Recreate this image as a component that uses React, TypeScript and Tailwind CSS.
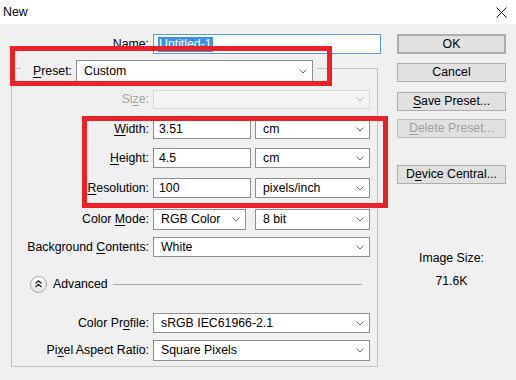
import React from "react";

// Access-key label: underlines one character
function Key({ pre = "", k, post = "" }: { pre?: string; k: string; post?: string }) {
  return (
    <span>
      {pre}
      <span className="underline underline-offset-[2px]">{k}</span>
      {post}
    </span>
  );
}

function Chevron({ light }: { light?: boolean }) {
  return (
    <svg width="8" height="5" viewBox="0 0 8 5" className="shrink-0">
      <path d="M0.5 0.5 L4 4 L7.5 0.5" fill="none" stroke={light ? "#b8b8b8" : "#6a6a6a"} strokeWidth="1" />
    </svg>
  );
}

function Select({ value, className = "", disabled }: { value: string; className?: string; disabled?: boolean }) {
  return (
    <div
      className={`flex h-full items-center justify-between border pl-[7px] pr-[5px] ${
        disabled ? "border-[#d9d9d9] bg-[#f4f4f4]" : "border-[#8f8f8f] bg-white"
      } ${className}`}
    >
      <span>{value}</span>
      <Chevron light={disabled} />
    </div>
  );
}

function Field({ value, className = "" }: { value: string; className?: string }) {
  return (
    <div className={`flex h-full items-center border border-[#8f8f8f] bg-white pl-[5px] ${className}`}>
      {value}
    </div>
  );
}

function Row({ label, className = "", children }: { label: React.ReactNode; className?: string; children: React.ReactNode }) {
  return (
    <div className={`flex items-center ${className}`}>
      <div className="w-[141px] shrink-0 pr-[4px] text-right">{label}</div>
      {children}
    </div>
  );
}

function Button({ children, className = "" }: { children: React.ReactNode; className?: string }) {
  return (
    <div className={`flex h-[19px] items-center justify-center border border-[#adadad] bg-[#e1e1e1] ${className}`}>
      {children}
    </div>
  );
}

export default function App() {
  return (
    <div className="relative h-[380px] w-[516px] overflow-hidden bg-[#f0f0f0] font-['Liberation_Sans',Arial,sans-serif] text-[12.3px] leading-[15px] text-black">
      {/* title bar */}
      <div className="flex h-[24px] items-center justify-between bg-white pl-[3px] pr-[9px]">
        <span>New</span>
        <svg width="11" height="11" viewBox="0 0 11 11">
          <path d="M0.5 0.5 L10.5 10.5 M10.5 0.5 L0.5 10.5" stroke="#111" strokeWidth="1" />
        </svg>
      </div>

      <div className="flex">
        {/* left column */}
        <div className="w-[397px] shrink-0 pt-[10px]">
          <div className="flex h-[20px] items-center">
            <div className="w-[153px] pr-[4px] text-right">
              <Key k="N" post="ame:" />
            </div>
            <div className="flex h-full w-[228px] items-center border border-[#5a9ad8] bg-white pl-[4px]">
              <span className="bg-[#3d8ee6] px-[1px] text-white">Untitled-1</span>
            </div>
          </div>

          {/* group box */}
          <div className="ml-[11px] mt-[14px] w-[367px] border border-[#c4c4c4] pb-[5px]">
            <div className="-mt-[9px] ml-[9px] flex h-[22px] w-[296px] items-center bg-[#f0f0f0]">
              <div className="w-[55px] pr-[4px] text-right">
                <Key k="P" post="reset:" />
              </div>
              <Select value="Custom" className="w-[237px]" />
            </div>

            <Row className="mt-[8px] h-[19px]" label={<span className="text-[#a4a4a4]"><Key pre="Si" k="z" post="e:" /></span>}>
              <Select value="" disabled className="w-[217px]" />
            </Row>

            <Row className="mt-[11px] h-[19px]" label={<Key k="W" post="idth:" />}>
              <Field value="3.51" className="w-[98px]" />
              <Select value="cm" className="ml-[4px] w-[115px]" />
            </Row>

            <Row className="mt-[9px] h-[20px]" label={<Key k="H" post="eight:" />}>
              <Field value="4.5" className="w-[98px]" />
              <Select value="cm" className="ml-[4px] w-[115px]" />
            </Row>

            <Row className="mt-[10px] h-[20px]" label={<Key k="R" post="esolution:" />}>
              <Field value="100" className="w-[98px]" />
              <Select value="pixels/inch" className="ml-[4px] w-[115px]" />
            </Row>

            <Row className="mt-[11px] h-[21px]" label={<Key pre="Color " k="M" post="ode:" />}>
              <Select value="RGB Color" className="w-[93px]" />
              <Select value="8 bit" className="ml-[9px] w-[115px]" />
            </Row>

            <Row className="mt-[7px] h-[20px]" label={<Key pre="Background " k="C" post="ontents:" />}>
              <Select value="White" className="w-[217px]" />
            </Row>

            {/* advanced toggle */}
            <div className="mt-[18px] flex h-[18px] items-center">
              <div className="ml-[18px] flex h-[17px] w-[17px] items-center justify-center rounded-full border border-[#a8a8a8] bg-gradient-to-b from-white to-[#e4e4e4]">
                <svg width="7" height="8" viewBox="0 0 7 8">
                  <path d="M0.5 3.5 L3.5 0.8 L6.5 3.5 M0.5 7 L3.5 4.3 L6.5 7" fill="none" stroke="#222" strokeWidth="1.2" />
                </svg>
              </div>
              <span className="ml-[6px]">Advanced</span>
              <div className="ml-[5px] mr-[15px] h-px flex-1 bg-[#a6a6a6]" />
            </div>

            <Row className="mt-[20px] h-[20px]" label={<Key pre="Color Pr" k="o" post="file:" />}>
              <Select value="sRGB IEC61966-2.1" className="w-[217px]" />
            </Row>

            <Row className="mt-[7px] h-[21px]" label={<Key pre="Pi" k="x" post="el Aspect Ratio:" />}>
              <Select value="Square Pixels" className="w-[217px]" />
            </Row>
          </div>
        </div>

        {/* right column */}
        <div className="w-[109px] shrink-0 pt-[10px]">
          <Button className="h-[20px] border-2 border-[#2a7bd0]">OK</Button>
          <Button className="mt-[9px]">Cancel</Button>
          <Button className="mt-[10px]">
            <Key k="S" post="ave Preset..." />
          </Button>
          <Button className="mt-[8px] border-[#bfbfbf] bg-[#cccccc] text-[#a0a0a0]">
            <Key k="D" post="elete Preset..." />
          </Button>
          <Button className="mt-[27px]">
            <Key pre="D" k="e" post="vice Central..." />
          </Button>
          <div className="mt-[67px] text-center">Image Size:</div>
          <div className="mt-[8px] text-center">71.6K</div>
        </div>
      </div>

      {/* red annotation frames */}
      <div className="absolute left-[10px] top-[46px] h-[40px] w-[322px] border-[5px] border-[#e8212b]" />
      <div className="absolute left-[82px] top-[116px] h-[92px] w-[306px] border-[5px] border-[#e8212b]" />
    </div>
  );
}
